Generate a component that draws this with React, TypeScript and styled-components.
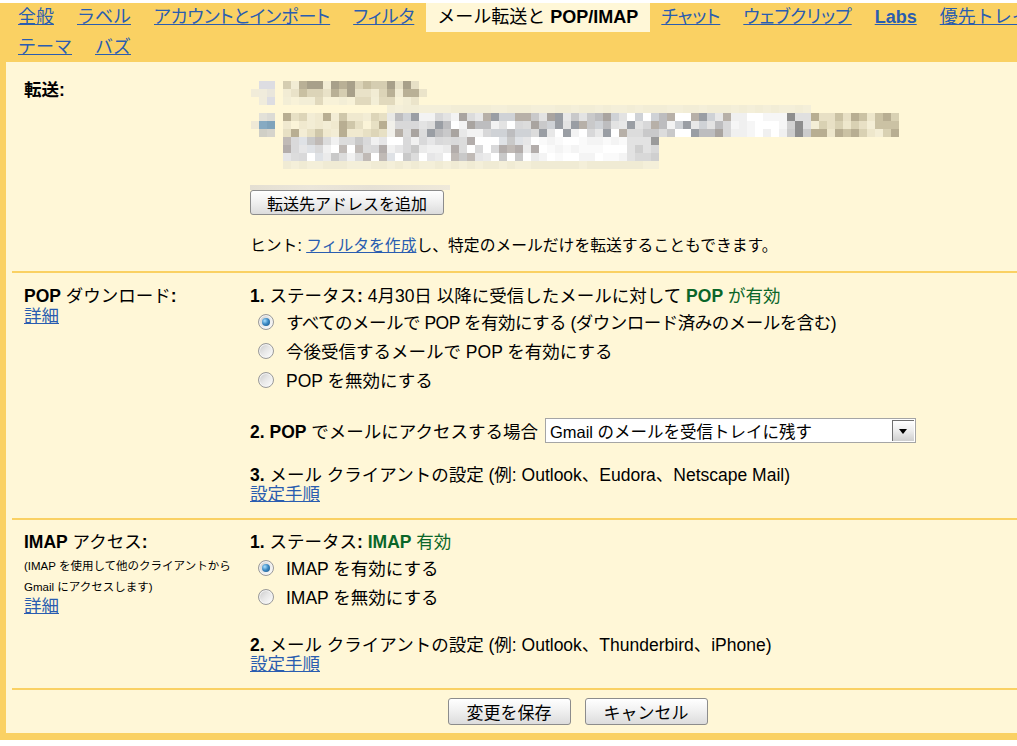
import React from 'react';
import styled, { createGlobalStyle } from 'styled-components';

const GOLD = '#fad163';
const CREAM = '#fff7d7';
const LINK = '#2a5db0';
const GREEN = '#0a6629';

const Global = createGlobalStyle`
  html, body { margin: 0; padding: 0; background: #fff; overflow: hidden; }
  body {
    font-family: "Liberation Sans", Arial, "Noto Sans CJK JP", sans-serif;
    color: #000;
  }
  * { box-sizing: border-box; }
`;

const Page = styled.div`
  width: 1149px;
  background: ${GOLD};
  padding: 0 6px 7px 6px;
`;

const TabRow = styled.div<{ $first?: boolean }>`
  display: flex;
  padding-left: 0.5px;
  margin-top: ${(p) => (p.$first ? '3px' : '0')};
  height: ${(p) => (p.$first ? '29px' : '30px')};
  line-height: ${(p) => (p.$first ? '29px' : '30px')};
  font-size: 18px;
  white-space: nowrap;
`;

const Tab = styled.a<{ $active?: boolean; $bold?: boolean; $palt?: boolean }>`
  display: block;
  padding: 0 11.5px;
  color: ${(p) => (p.$active ? '#000' : LINK)};
  background: ${(p) => (p.$active ? CREAM : 'transparent')};
  text-decoration: ${(p) => (p.$active ? 'none' : 'underline')};
  font-weight: ${(p) => (p.$bold ? 700 : 400)};
  font-feature-settings: ${(p) => (p.$palt ? '"palt"' : 'normal')};
  cursor: pointer;
`;

const Panel = styled.div`
  background: ${CREAM};
  font-size: 17.5px;
`;

const Section = styled.div<{ $first?: boolean; $pt: number; $pb: number }>`
  display: grid;
  grid-template-columns: 226px 1fr;
  margin-left: 6px;
  padding: ${(p) => p.$pt}px 0 ${(p) => p.$pb}px 12px;
  border-top: ${(p) => (p.$first ? 'none' : `2px solid ${GOLD}`)};
`;

const LabelCol = styled.div`
  display: flex;
  flex-direction: column;
`;

const ValueCol = styled.div`
  display: flex;
  flex-direction: column;
  align-items: flex-start;
`;

const Line = styled.div<{ $lh: number; $mt?: number; $size?: number }>`
  line-height: ${(p) => p.$lh}px;
  margin-top: ${(p) => p.$mt ?? 0}px;
  font-size: ${(p) => (p.$size ? `${p.$size}px` : 'inherit')};
  white-space: nowrap;
`;

const B = styled.b`
  font-weight: 700;
`;

const Green = styled.span`
  color: ${GREEN};
`;

const Link = styled.a`
  color: ${LINK};
  text-decoration: underline;
  cursor: pointer;
`;

const RadioRow = styled.label`
  display: flex;
  align-items: center;
  height: 29px;
  gap: 12px;
  padding-left: 8px;
  white-space: nowrap;
`;

const RadioText = styled.span<{ $tight?: boolean }>`
  letter-spacing: ${(p) => (p.$tight ? '-0.5px' : '0')};
`;

const RadioDot = styled.span<{ $checked?: boolean }>`
  position: relative;
  width: 16px;
  height: 16px;
  border-radius: 50%;
  border: 1px solid #9a9a9a;
  background: linear-gradient(135deg, #c8c8c8 0%, #e6e6e6 45%, #ffffff 100%);
  box-shadow: inset 0 0 0 1px #f4f4f4;
  flex: none;
  &::after {
    content: '';
    display: ${(p) => (p.$checked ? 'block' : 'none')};
    position: absolute;
    left: 3px;
    top: 3px;
    width: 8px;
    height: 8px;
    border-radius: 50%;
    background: radial-gradient(circle at 35% 35%, #a9e0ff 0%, #3d8ac4 45%, #134f80 100%);
  }
`;

const GrayButton = styled.button<{ $h: number; $pad: number; $size: number }>`
  height: ${(p) => p.$h}px;
  padding: 0 ${(p) => p.$pad}px;
  font-family: inherit;
  font-size: ${(p) => p.$size}px;
  color: #000;
  border: 1px solid #8c8c8c;
  border-radius: 3px;
  background: linear-gradient(#ffffff 0%, #f1f1f1 45%, #dcdcdc 100%);
  box-shadow: inset 0 1px 0 #fff;
  cursor: pointer;
  white-space: nowrap;
`;

const BlurStrip = styled.div`
  width: 200px;
  height: 5px;
  margin-top: 16px;
  background: linear-gradient(90deg, #e4dfd2, #ebe6da 30%, #e6e1d5 60%, #efe9da);
`;

const SelectRow = styled.div`
  display: flex;
  align-items: center;
  gap: 7px;
  height: 25px;
  margin-top: 24px;
  white-space: nowrap;
`;

const SelectBox = styled.div`
  display: flex;
  align-items: center;
  justify-content: space-between;
  width: 371px;
  height: 25px;
  border: 1px solid #a5a5a5;
  background: #fff;
  padding: 0 1px 0 4px;
  font-size: 16.5px;
`;

const SelectArrow = styled.span`
  display: flex;
  align-items: center;
  justify-content: center;
  width: 22px;
  height: 21px;
  border-left: 1px solid #6f6f6f;
  border-top: 1px solid #6f6f6f;
  background: linear-gradient(#ffffff 0%, #ececec 50%, #cfcfcf 100%);
  &::before {
    content: '';
    border-left: 4px solid transparent;
    border-right: 4px solid transparent;
    border-top: 5px solid #000;
  }
`;

const Footer = styled.div`
  display: flex;
  justify-content: center;
  gap: 14px;
  margin-left: 6px;
  padding: 8px 0;
  border-top: 2px solid ${GOLD};
`;

type Seg = { x: number; y: number; w: number; h: number; pal: string[]; seed: number };

const OX = 250;
const OY = 79;

const segs: Seg[] = [
  { x: 251, y: 89, w: 8, h: 8, pal: ['#f1ecd9'], seed: 1 },
  { x: 259, y: 81, w: 16, h: 24, pal: ['#e9e6dc', '#dddde2', '#e4e2da', '#f0ecdc'], seed: 3 },
  { x: 283, y: 81, w: 136, h: 16, pal: ['#b9b096', '#a8a08a', '#d5cdb1', '#e7e0c6', '#c9c0a2', '#f2ecd4', '#dcd4b8', '#e9e2c8'], seed: 7 },
  { x: 283, y: 97, w: 136, h: 8, pal: ['#ebe4ca', '#f3eed6', '#e1d9bd', '#f8f2d8'], seed: 11 },
  { x: 419, y: 89, w: 8, h: 8, pal: ['#ebe4ca'], seed: 2 },
  { x: 387, y: 105, w: 424, h: 8, pal: ['#f4efd9', '#f2edd6'], seed: 13 },
  { x: 251, y: 121, w: 8, h: 8, pal: ['#efe9d6'], seed: 5 },
  { x: 259, y: 113, w: 16, h: 8, pal: ['#dcdbd5', '#e3e1d8'], seed: 17 },
  { x: 259, y: 121, w: 16, h: 8, pal: ['#86aac2', '#7fa3bb'], seed: 19 },
  { x: 259, y: 129, w: 16, h: 8, pal: ['#d0cfc6', '#d6d4cc'], seed: 23 },
  { x: 283, y: 113, w: 104, h: 24, pal: ['#cfc7aa', '#e7e0c4', '#f3edd5', '#b8ae92', '#ddd5b8', '#fbf4d8', '#f0e9cf'], seed: 29 },
  { x: 387, y: 113, w: 8, h: 24, pal: ['#f1f0ea', '#e9e9e6'], seed: 31 },
  { x: 395, y: 113, w: 336, h: 24, pal: ['#c9c9ca', '#d8d8d9', '#a9a4a0', '#e8e8e8', '#ffffff', '#bdbdbf', '#dcdcdc', '#b7b0a8', '#f3f3f3', '#cfd2d6', '#ffffff', '#e3e3e3', '#9a9ea4'], seed: 37 },
  { x: 731, y: 113, w: 56, h: 24, pal: ['#ffffff', '#f6f6f6', '#ffffff', '#f0f0f0'], seed: 39 },
  { x: 787, y: 113, w: 24, h: 24, pal: ['#d2d2d2', '#e0e0e0', '#8e8e8e', '#cccccc'], seed: 40 },
  { x: 811, y: 113, w: 88, h: 24, pal: ['#e8e0c5', '#d9d1b3', '#b8ae92', '#f4eed6', '#cbc2a4', '#eee7cc'], seed: 41 },
  { x: 283, y: 137, w: 256, h: 24, pal: ['#f1f1f1', '#d9d9da', '#b3adab', '#c9c9c9', '#ffffff', '#e6e6e7', '#dcdcdc', '#dfe2e6', '#c0bab6', '#ffffff', '#ebebeb'], seed: 43 },
  { x: 539, y: 137, w: 88, h: 24, pal: ['#ffffff', '#fafafa', '#f4f4f4'], seed: 44 },
  { x: 627, y: 137, w: 32, h: 24, pal: ['#d8d8d8', '#e2e2e2', '#cfcfcf', '#9a9a9a'], seed: 45 },
  { x: 283, y: 161, w: 376, h: 8, pal: ['#f4efd9', '#f0ebd4'], seed: 47 },
];

function BlurredAddresses() {
  const rects: React.ReactElement[] = [];
  segs.forEach((s, si) => {
    let r = s.seed * 7919;
    for (let y = s.y; y < s.y + s.h; y += 8) {
      for (let x = s.x; x < s.x + s.w; x += 8) {
        r = (r * 9301 + 49297) % 233280;
        const c = s.pal[Math.floor((r / 233280) * s.pal.length)];
        rects.push(
          <rect key={`${si}-${x}-${y}`} x={x - OX} y={y - OY} width={8} height={8} fill={c} />
        );
      }
    }
  });
  return (
    <svg width={660} height={90} viewBox="0 0 660 90" style={{ display: 'block' }}>
      {rects}
    </svg>
  );
}

export default function App() {
  return (
    <>
      <Global />
      <Page>
        <TabRow $first>
          <Tab>全般</Tab>
          <Tab>ラベル</Tab>
          <Tab $palt>アカウントとインポート</Tab>
          <Tab $palt>フィルタ</Tab>
          <Tab $active>
            メール転送と <B>POP/IMAP</B>
          </Tab>
          <Tab $palt>チャット</Tab>
          <Tab $palt>ウェブクリップ</Tab>
          <Tab $bold>Labs</Tab>
          <Tab>優先トレイ</Tab>
        </TabRow>
        <TabRow>
          <Tab>テーマ</Tab>
          <Tab>バズ</Tab>
        </TabRow>
        <Panel>
          <Section $first $pt={17} $pb={15}>
            <LabelCol>
              <Line $lh={22}>
                <B>転送:</B>
              </Line>
            </LabelCol>
            <ValueCol>
              <BlurredAddresses />
              <BlurStrip />
              <GrayButton $h={25} $pad={16} $size={16}>
                転送先アドレスを追加
              </GrayButton>
              <Line $lh={20} $mt={21} $size={15.8}>
                ヒント: <Link>フィルタを作成</Link>し、特定のメールだけを転送することもできます。
              </Line>
            </ValueCol>
          </Section>

          <Section $pt={12} $pb={14}>
            <LabelCol>
              <Line $lh={22}>
                <B>POP</B> ダウンロード<B>:</B>
              </Line>
              <Line $lh={18}>
                <Link>詳細</Link>
              </Line>
            </LabelCol>
            <ValueCol>
              <Line $lh={22}>
                <B>1.</B> ステータス<B>:</B> 4月30日 以降に受信したメールに対して{' '}
                <Green>
                  <B>POP</B> が有効
                </Green>
              </Line>
              <RadioRow>
                <RadioDot $checked />
                <RadioText $tight>
                  すべてのメールで POP を有効にする (ダウンロード済みのメールを含む)
                </RadioText>
              </RadioRow>
              <RadioRow>
                <RadioDot />
                <RadioText>今後受信するメールで POP を有効にする</RadioText>
              </RadioRow>
              <RadioRow>
                <RadioDot />
                <RadioText>POP を無効にする</RadioText>
              </RadioRow>
              <SelectRow>
                <span>
                  <B>2. POP</B> でメールにアクセスする場合
                </span>
                <SelectBox>
                  <span>Gmail のメールを受信トレイに残す</span>
                  <SelectArrow />
                </SelectBox>
              </SelectRow>
              <Line $lh={20} $mt={22}>
                <B>3.</B> メール クライアントの設定 (例: Outlook、Eudora、Netscape Mail)
              </Line>
              <Line $lh={19}>
                <Link>設定手順</Link>
              </Line>
            </ValueCol>
          </Section>

          <Section $pt={12} $pb={14}>
            <LabelCol>
              <Line $lh={21}>
                <B>IMAP</B> アクセス<B>:</B>
              </Line>
              <Line $lh={21} $mt={2.5} $size={11.5}>
                (IMAP を使用して他のクライアントから
              </Line>
              <Line $lh={21} $size={11.5}>
                Gmail にアクセスします)
              </Line>
              <Line $lh={16}>
                <Link>詳細</Link>
              </Line>
            </LabelCol>
            <ValueCol>
              <Line $lh={21}>
                <B>1.</B> ステータス<B>:</B>{' '}
                <Green>
                  <B>IMAP</B> 有効
                </Green>
              </Line>
              <RadioRow>
                <RadioDot $checked />
                <RadioText>IMAP を有効にする</RadioText>
              </RadioRow>
              <RadioRow>
                <RadioDot />
                <RadioText>IMAP を無効にする</RadioText>
              </RadioRow>
              <Line $lh={20} $mt={24}>
                <B>2.</B> メール クライアントの設定 (例: Outlook、Thunderbird、iPhone)
              </Line>
              <Line $lh={19}>
                <Link>設定手順</Link>
              </Line>
            </ValueCol>
          </Section>

          <Footer>
            <GrayButton $h={27} $pad={18} $size={17}>
              変更を保存
            </GrayButton>
            <GrayButton $h={27} $pad={18} $size={17}>
              キャンセル
            </GrayButton>
          </Footer>
        </Panel>
      </Page>
    </>
  );
}
